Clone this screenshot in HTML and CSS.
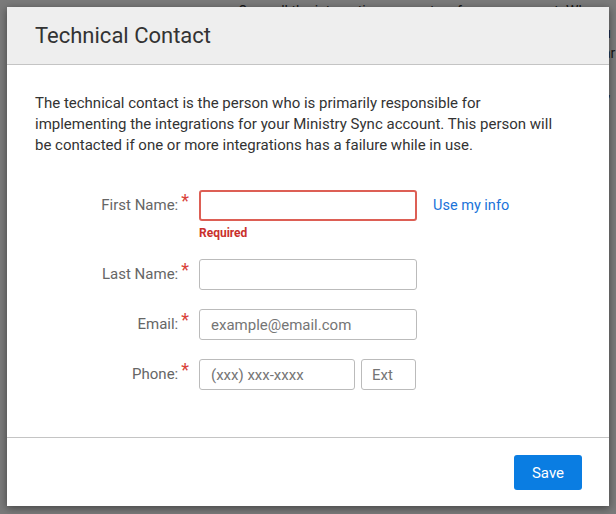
FILE: index.html
```html
<!DOCTYPE html>
<html lang="en">
  <head>
    <meta charset="UTF-8" />
    <meta name="viewport" content="width=device-width, initial-scale=1.0" />
    <title>Technical Contact</title>
    <link rel="stylesheet" href="styles.css">
  </head>
  <body>
    <div class="page-behind">
      <p class="behind-top">Once all the integrations are set up for your account. Whe</p>
      <p class="behind-side">u<br>ar<br><br>t,</p>
    </div>

    <div class="overlay">
      <div class="modal">
        <div class="modal-header">
          <h1>Technical Contact</h1>
        </div>

        <div class="modal-body">
          <p class="intro">The technical contact is the person who is primarily responsible for implementing the integrations for your Ministry Sync account. This person will be contacted if one or more integrations has a failure while in use.</p>

          <form class="contact-form">
            <div class="form-row">
              <label for="first-name">First Name:<span class="req">*</span></label>
              <div class="field">
                <div class="field-line">
                  <input type="text" id="first-name" class="input error" />
                  <a href="#" class="use-info">Use my info</a>
                </div>
                <div class="error-text">Required</div>
              </div>
            </div>

            <div class="form-row">
              <label for="last-name">Last Name:<span class="req">*</span></label>
              <div class="field">
                <input type="text" id="last-name" class="input" />
              </div>
            </div>

            <div class="form-row">
              <label for="email">Email:<span class="req">*</span></label>
              <div class="field">
                <input type="text" id="email" class="input" placeholder="example@email.com" />
              </div>
            </div>

            <div class="form-row">
              <label for="phone">Phone:<span class="req">*</span></label>
              <div class="field field-line">
                <input type="text" id="phone" class="input phone" placeholder="(xxx) xxx-xxxx" />
                <input type="text" id="ext" class="input ext" placeholder="Ext" />
              </div>
            </div>
          </form>
        </div>

        <div class="modal-footer">
          <button type="button" class="btn-save">Save</button>
        </div>
      </div>
    </div>
  </body>
</html>
```

FILE: styles.css
```css
body {
  margin: 0;
  padding: 0;
  font-family: Roboto, "Liberation Sans", Arial, sans-serif;
  background-color: #fff;
  width: 616px;
  height: 514px;
  overflow: hidden;
}

/* page content behind the dialog */
.page-behind {
  position: absolute;
  top: 0;
  left: 0;
  width: 616px;
  height: 514px;
  color: #333;
  font-size: 14px;
  line-height: 19.5px;
}

.behind-top {
  position: absolute;
  top: 2px;
  left: 238px;
  margin: 0;
  white-space: nowrap;
}

.behind-side {
  position: absolute;
  top: 24px;
  left: 603px;
  margin: 0;
  white-space: nowrap;
}

.overlay {
  position: absolute;
  top: 0;
  left: 0;
  width: 616px;
  height: 514px;
  background-color: rgba(0, 0, 0, 0.52);
  padding: 7px;
  box-sizing: border-box;
}

.modal {
  width: 602px;
  height: 499px;
  background-color: #fff;
  display: flex;
  flex-direction: column;
  box-shadow: 0 2px 8px rgba(0, 0, 0, 0.45);
}

.modal-header {
  height: 58px;
  background-color: #eee;
  border-bottom: 1px solid #c4c4c4;
  display: flex;
  align-items: center;
  padding: 0 28px;
  box-sizing: border-box;
}

.modal-header h1 {
  margin: 0;
  font-size: 22px;
  font-weight: 400;
  color: #333;
}

.modal-body {
  flex: 1;
  padding: 28px 40px 0 28px;
}

.intro {
  margin: 0 0 34px 0;
  font-size: 15px;
  line-height: 21px;
  color: #333;
}

.form-row {
  display: flex;
  align-items: flex-start;
  margin-bottom: 19px;
}

.form-row label {
  width: 154px;
  margin-right: 10px;
  text-align: right;
  line-height: 31px;
  height: 31px;
  font-size: 15px;
  color: #666;
}

.req {
  color: #d9423a;
  font-size: 18px;
  line-height: 0;
  position: relative;
  top: -3px;
  margin-left: 3px;
}

.field-line {
  display: flex;
  align-items: center;
}

.input {
  width: 218px;
  height: 31px;
  box-sizing: border-box;
  border: 1px solid #bbb;
  border-radius: 3px;
  padding: 0 11px;
  font-family: Roboto, "Liberation Sans", Arial, sans-serif;
  font-size: 15px;
  color: #333;
  outline: none;
  display: block;
}

.input::placeholder {
  color: #757575;
}

.input.error {
  border: 2px solid #dd5f55;
  padding: 0 10px;
}

.input.phone {
  width: 156px;
}

.input.ext {
  width: 55px;
  margin-left: 6px;
  padding: 0 10px;
}

.use-info {
  margin-left: 16px;
  font-size: 14.5px;
  color: #1a73d9;
  text-decoration: none;
}

.error-text {
  margin-top: 5px;
  font-size: 12px;
  line-height: 14px;
  font-weight: 700;
  color: #c9302c;
}

.modal-footer {
  height: 69px;
  border-top: 1px solid #c4c4c4;
  box-sizing: border-box;
  display: flex;
  justify-content: flex-end;
  align-items: flex-start;
  padding: 17px 27px 0 0;
}

.btn-save {
  width: 68px;
  height: 35px;
  background-color: #0a7de2;
  color: #fff;
  border: none;
  border-radius: 3px;
  font-family: Roboto, "Liberation Sans", Arial, sans-serif;
  font-size: 15px;
  cursor: pointer;
}
```
